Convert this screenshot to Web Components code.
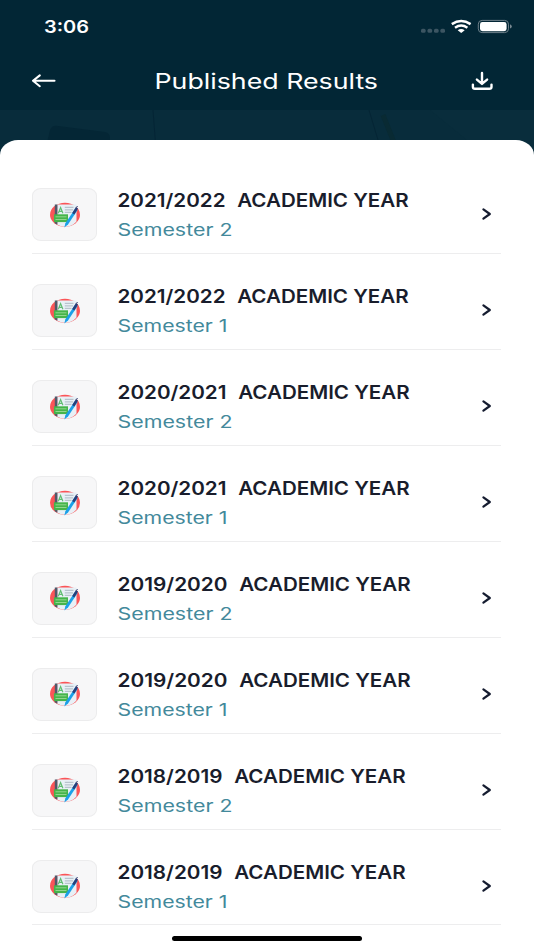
<!DOCTYPE html>
<html lang="en">
<head>
<meta charset="utf-8">
<title>Published Results</title>
<style>
    body {
        margin: 0;
        height: 950px;
        overflow: hidden;
        background: #fff;
        font-family: Inter, "Open Sans", sans-serif;
        --navy: #022635;
        --ink: #191d2c;
        --teal: #43899b;
        --line: #ededee;
    }
</style>
</head>
<body>
<results-app>
    <status-bar slot="status" time="3:06"></status-bar>
    <nav-bar slot="nav" heading="Published Results"></nav-bar>
    <result-row year="2021/2022" width="108" semester="2"></result-row>
    <result-row year="2021/2022" width="108" semester="1"></result-row>
    <result-row year="2020/2021" width="109" semester="2"></result-row>
    <result-row year="2020/2021" width="109" semester="1"></result-row>
    <result-row year="2019/2020" width="110" semester="2"></result-row>
    <result-row year="2019/2020" width="110" semester="1"></result-row>
    <result-row year="2018/2019" width="105" semester="2"></result-row>
    <result-row year="2018/2019" width="105" semester="1"></result-row>
</results-app>
<script>
customElements.define('status-bar', class extends HTMLElement {
    connectedCallback() {
        this.attachShadow({ mode: "open" });
        this.shadowRoot.innerHTML = `
            <style>
                :host {
                    display: flex;
                    justify-content: space-between;
                    height: 54px;
                    padding: 0 20px 0 44px;
                    box-sizing: border-box;
                }
                svg { display: block; }
                text { font-weight: 600; font-size: 17px; fill: #fff; }
            </style>
            <svg width="60" height="54">
                <text x="0" y="32.9" textLength="45" lengthAdjust="spacingAndGlyphs">${this.getAttribute('time')}</text>
            </svg>
            <svg width="94" height="54" viewBox="420 0 94 54">
                <g fill="#3c5562">
                    <rect x="421" y="28.8" width="4.6" height="4" rx="1.5" />
                    <rect x="427.5" y="28.8" width="4.6" height="4" rx="1.5" />
                    <rect x="434" y="28.8" width="4.6" height="4" rx="1.5" />
                    <rect x="440.4" y="28.8" width="4.6" height="4" rx="1.5" />
                </g>
                <g fill="none" stroke="#fff" stroke-width="2.5">
                    <path d="M451.8 24.1Q461.2 18.1 470.6 24.1" />
                    <path d="M455 27.7Q461.2 23.5 467.4 27.7" />
                </g>
                <path d="M457.7 30.2Q461.2 27.8 464.7 30.2L461.2 33Z" fill="#fff" />
                <rect x="478.3" y="20.4" width="30.2" height="12.2" rx="3.8" fill="none" stroke="#6e808a" />
                <rect x="480" y="22" width="26.6" height="9.2" rx="2.4" fill="#fff" />
                <path d="M510 24.3Q511.8 25 511.8 26.4T510 28.6Z" fill="#788992" />
            </svg>
        `
    }
})

customElements.define('nav-bar', class extends HTMLElement {
    connectedCallback() {
        this.attachShadow({ mode: "open" });
        this.shadowRoot.innerHTML = `
            <style>
                :host {
                    display: grid;
                    grid-template-columns: 32px 1fr 32px;
                    height: 56px;
                    padding: 0 36px 0 28px;
                    box-sizing: border-box;
                }
                svg { display: block; }
                .title { justify-self: center; }
                text { font-size: 20.8px; fill: #fff; }
                path { fill: none; stroke: #fff; stroke-width: 2.1; stroke-linecap: round; stroke-linejoin: round; }
                .download { stroke-width: 2.4; }
            </style>
            <svg width="32" height="56" viewBox="28 54 32 56">
                <path d="M54.5 80.8H33M39.8 75.4L33 80.8L39.8 86.2" />
            </svg>
            <svg class="title" width="230" height="56" viewBox="148 54 230 56">
                <text x="154.5" y="88.6" textLength="223.5" lengthAdjust="spacingAndGlyphs">${this.getAttribute('heading')}</text>
            </svg>
            <svg width="32" height="56" viewBox="466 54 32 56">
                <path class="download" d="M482 73V83.6M476.9 79.6L482 83.9L487.1 79.6M472.9 84.6V87Q472.9 88.7 475 88.7H489.3Q491.5 88.7 491.5 87V84.6" />
            </svg>
        `
    }
})

customElements.define('result-thumb', class extends HTMLElement {
    connectedCallback() {
        this.attachShadow({ mode: "open" });
        this.shadowRoot.innerHTML = `
            <style>
                :host {
                    display: flex;
                    align-items: center;
                    justify-content: center;
                    width: 65px;
                    height: 53px;
                    box-sizing: border-box;
                    border: 1px solid #ececed;
                    border-radius: 9px / 7.5px;
                    background: #f7f7f8;
                }
            </style>
            <svg width="32" height="26" viewBox="0 0 32 26">
                <ellipse cx="16" cy="12.8" rx="15" ry="12" fill="#fb5558" />
                <path d="M8.2 2.4H27.5V19.5Q23 24.8 16 24.8Q12 24.8 8.2 22.8Z" fill="#e8f0f6" />
                <path d="M5.8 2.4H8.4V22.8L5.8 21.2Z" fill="#50596a" />
                <path d="M9.3 11.2L11.6 5.6L13.9 11.2M10.1 9.3H13.1" fill="none" stroke="#61bd72" stroke-width="1.2" />
                <path d="M15.8 5.4H24.5M15.8 7.9H24M15.8 10.4H22.5" stroke="#b7c3cd" stroke-width="1.2" />
                <path d="M4.9 12.3H19V20.1H4.9Z" fill="#45b44b" />
                <path d="M6.5 14.8H17.5M6.5 17.5H17.5" stroke="#91d68e" stroke-width="1" />
                <path d="M26.2 6.5L28.6 8L19 22.6L15.3 25.4L16.4 21.2Z" fill="#1ba0e8" />
                <path d="M23.2 11L27 5L29 6.4L25.3 12.5Z" fill="#263f79" />
                <path d="M27.2 5.6L28.6 4" stroke="#274072" stroke-width="1" />
            </svg>
        `
    }
})

customElements.define('result-row', class extends HTMLElement {
    connectedCallback() {
        const year = this.getAttribute('year')
        const width = Number(this.getAttribute('width'))
        const semester = this.getAttribute('semester')
        this.attachShadow({ mode: "open" });
        this.shadowRoot.innerHTML = `
            <style>
                :host {
                    display: grid;
                    grid-template-columns: 65px 1fr 30px;
                    column-gap: 20px;
                    height: 95.88px;
                    padding-top: 30px;
                    box-sizing: border-box;
                    border-bottom: 1px solid var(--line);
                }
                svg { display: block; }
                .year { font-size: 18.4px; font-weight: 600; fill: var(--ink); }
                .semester { font-size: 16.8px; fill: var(--teal); }
            </style>
            <result-thumb></result-thumb>
            <svg width="310" height="60">
                <text class="year" y="19.2" xml:space="preserve"><tspan x="0.5" textLength="${width}" lengthAdjust="spacingAndGlyphs">${year}</tspan>  <tspan x="${width + 12.2}" textLength="171.5" lengthAdjust="spacingAndGlyphs">ACADEMIC YEAR</tspan></text>
                <text class="semester" x="0.5" y="48.1" textLength="${semester === '1' ? 110 : 115}" lengthAdjust="spacingAndGlyphs">Semester ${semester}</text>
            </svg>
            <svg width="30" height="60">
                <path d="M12.4 21.3L18.8 26L12.4 30.7" fill="none" stroke="#151c30" stroke-width="2.2" stroke-linecap="round" stroke-linejoin="round" />
            </svg>
        `
    }
})

customElements.define('results-app', class extends HTMLElement {
    connectedCallback() {
        this.attachShadow({ mode: "open" });
        this.shadowRoot.innerHTML = `
            <style>
                :host {
                    display: block;
                    position: relative;
                    width: 534px;
                    height: 950px;
                    overflow: hidden;
                }
                header { background: var(--navy); height: 110px; }
                .banner { display: block; background: #082c3b; }
                .sheet {
                    margin-top: -22px;
                    position: relative;
                    height: 810px;
                    padding: 18.4px 33px 0 32px;
                    box-sizing: border-box;
                    background: #fff;
                    border-radius: 18px 18px 0 0 / 15px 15px 0 0;
                }
                .home {
                    position: absolute;
                    left: 172px;
                    bottom: 9px;
                    width: 190px;
                    height: 5px;
                    border-radius: 3px;
                    background: #000;
                }
            </style>
            <header>
                <slot name="status"></slot>
                <slot name="nav"></slot>
            </header>
            <svg class="banner" width="534" height="52">
                <path d="M47 33L50 20Q52 15 58 16L105 22Q110 23 110 28V40H47Z" fill="#042635" />
                <path d="M153 0L156 40" stroke="#052535" />
                <path d="M369 0L381 40" stroke="#052535" />
                <path d="M383 5L397 40" stroke="#092a33" stroke-width="5" />
                <path d="M430 0L467 30L534 40V0Z" fill="#092d3c" />
            </svg>
            <div class="sheet"><slot></slot></div>
            <div class="home"></div>
        `
    }
})
</script>
</body>
</html>
